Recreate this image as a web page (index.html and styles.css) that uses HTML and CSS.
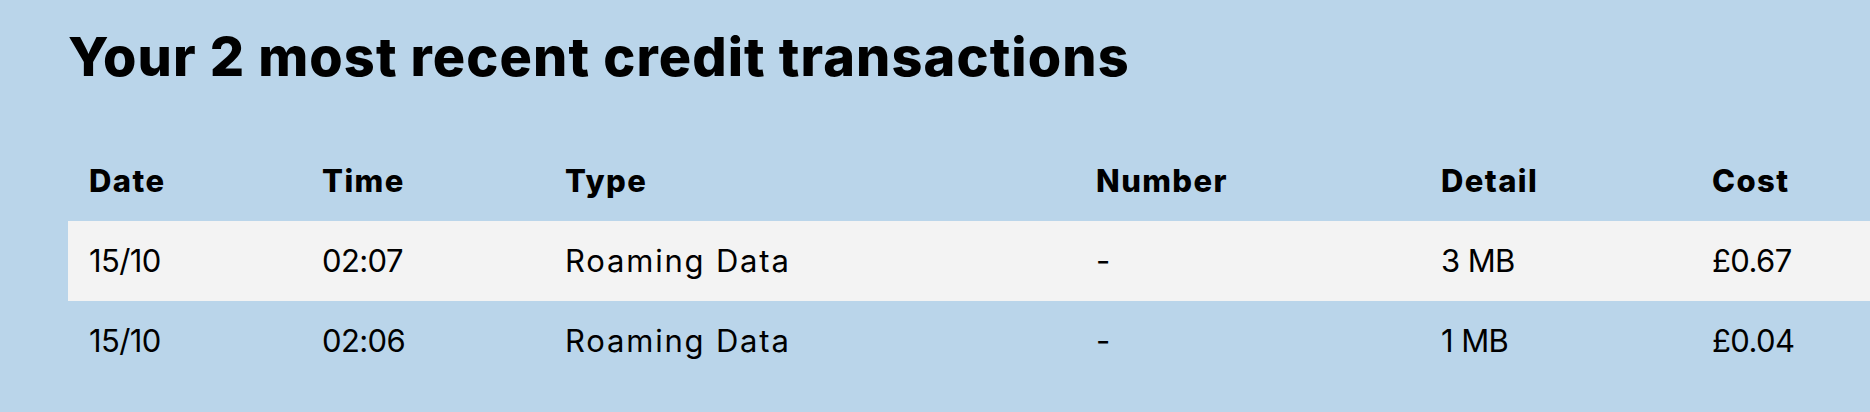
FILE: index.html
```html
<!DOCTYPE html>
<html lang="en">
<head>
<meta charset="utf-8">
<title>Recent credit transactions</title>
<link rel="stylesheet" href="styles.css">
</head>
<body>
<section class="panel">
  <h1 class="title">Your 2 most recent credit transactions</h1>
  <table class="tx">
    <colgroup>
      <col class="c-date"><col class="c-time"><col class="c-type"><col class="c-number"><col class="c-detail"><col class="c-cost">
    </colgroup>
    <thead>
      <tr>
        <th>Date</th><th>Time</th><th>Type</th><th>Number</th><th>Detail</th><th>Cost</th>
      </tr>
    </thead>
    <tbody>
      <tr class="alt">
        <td>15/10</td><td>02:07</td><td class="word">Roaming Data</td><td>-</td><td>3 MB</td><td>£0.67</td>
      </tr>
      <tr>
        <td>15/10</td><td>02:06</td><td class="word">Roaming Data</td><td>-</td><td>1 MB</td><td>£0.04</td>
      </tr>
    </tbody>
  </table>
</section>
</body>
</html>
```

FILE: styles.css
```css
html, body {
  margin: 0;
  padding: 0;
  background: #bad5ea;
}

body {
  font-family: "Inter", "Noto Sans", sans-serif;
  color: #000;
  overflow: hidden;
}

.panel {
  padding: 29px 0 0 68px;
  height: 412px;
  box-sizing: border-box;
}

.title {
  margin: 0 0 56px 0;
  font-size: 54px;
  line-height: 56px;
  font-weight: 800;
  letter-spacing: 1.1px;
}

.tx {
  border-collapse: collapse;
  table-layout: fixed;
  width: 1802px;
}

.c-date { width: 233px; }
.c-time { width: 243px; }
.c-type { width: 531px; }
.c-number { width: 345px; }
.c-detail { width: 271px; }
.c-cost { width: 179px; }

.tx th,
.tx td {
  height: 80px;
  padding: 0 0 0 21px;
  text-align: left;
  vertical-align: middle;
  font-size: 31px;
  line-height: 40px;
  white-space: nowrap;
}

.tx th {
  font-weight: 800;
  letter-spacing: 1.4px;
}

.tx td {
  font-weight: 400;
  letter-spacing: -0.6px;
}

.tx td.word {
  letter-spacing: 1.8px;
}

.tx tr.alt td {
  background: #f3f3f3;
}
```
